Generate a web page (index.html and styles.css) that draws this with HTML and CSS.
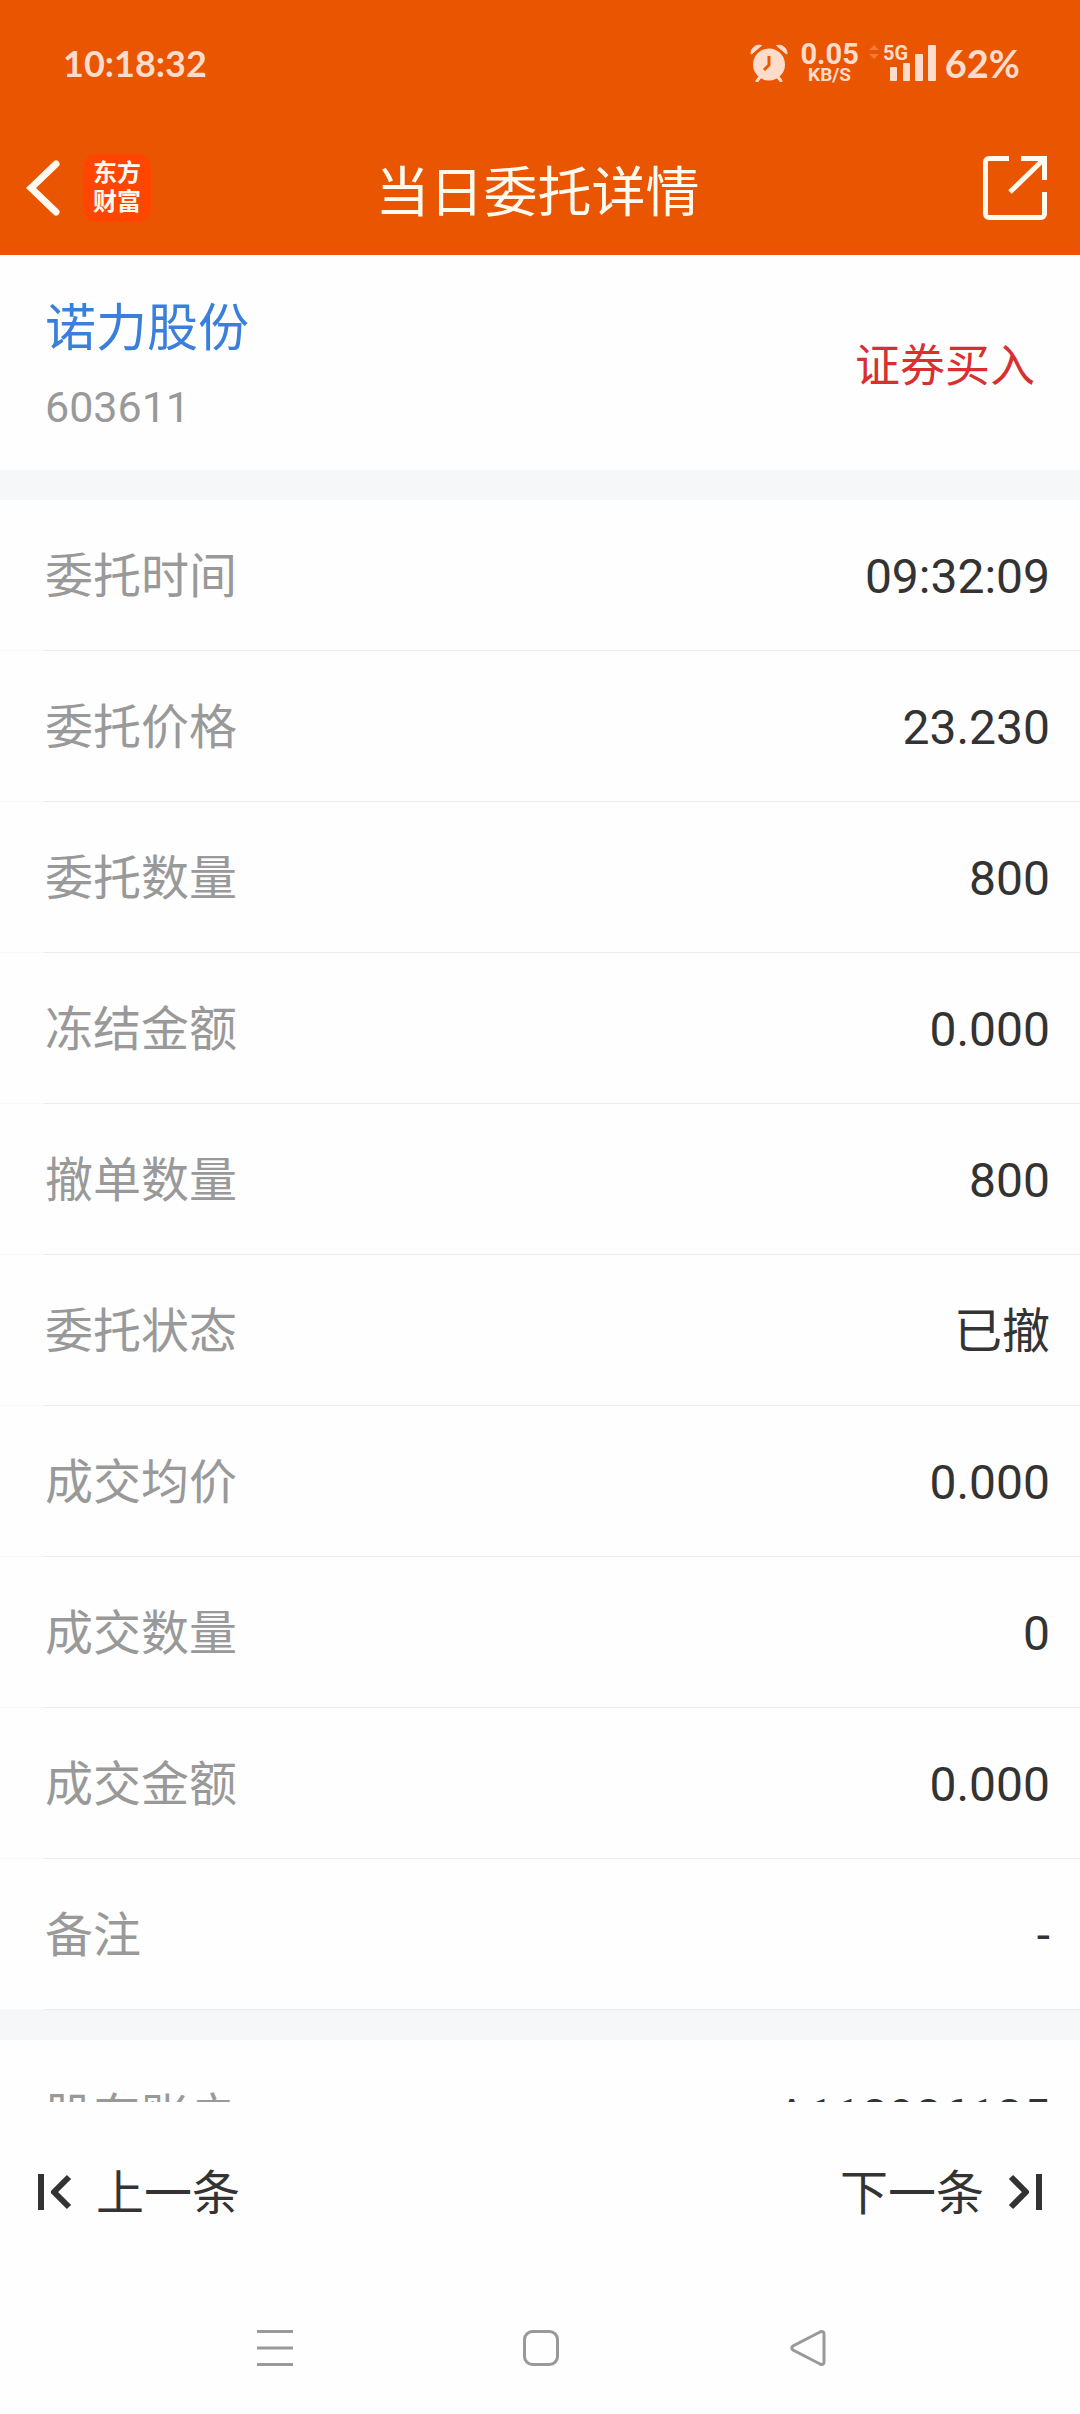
FILE: index.html
```html
<!DOCTYPE html>
<html lang="zh-CN">

<head>
  <meta charset="UTF-8">
  <meta name="viewport" content="width=device-width, initial-scale=1.0">
  <title>当日委托详情</title>
  <link rel="stylesheet" href="styles.css">
</head>

<body>
  <div class="page">
    <header class="top">
      <div class="status-bar">
        <time class="clock">10:18:32</time>
        <div class="status-icons">
          <svg class="icon-alarm" viewBox="0 0 38 38" aria-hidden="true">
            <circle cx="19" cy="20.500" r="16" fill="currentColor" />
            <path d="M1 9.500C1 4 6 0 11.500 1.500L1.500 10zM37 9.500C37 4 32 0 26.500 1.500L36.500 10z"
              fill="currentColor" stroke="currentColor" stroke-width="1" stroke-linejoin="round" />
            <path d="M10 33l-3 4M28 33l3 4" stroke="currentColor" stroke-width="3" stroke-linecap="round" />
            <path class="alarm-hands" d="M19 12v9l-5 5" />
          </svg>
          <div class="net-speed">
            <span class="net-value">0.05</span>
            <span class="net-unit">KB/S</span>
          </div>
          <svg class="icon-signal" viewBox="0 -6 68 50" aria-hidden="true">
            <path class="data-arrows" d="M0 6l5-5 5 5zM0 10h10l-5 5z" />
            <text class="signal-type" x="14" y="16">5G</text>
            <g fill="currentColor">
              <rect x="21" y="23" width="7" height="14" rx="1" />
              <rect x="34" y="19" width="7" height="18" rx="1" />
              <rect x="46" y="10" width="8" height="27" rx="1" />
              <rect x="59" y="1" width="8" height="36" rx="1" />
            </g>
          </svg>
          <span class="battery">62%</span>
        </div>
      </div>

      <div class="title-bar">
        <div class="title-side">
          <button class="icon-btn" type="button" aria-label="返回">
            <svg class="icon-back" viewBox="0 0 34 56" aria-hidden="true">
              <path d="M30 4L5 28l25 24" />
            </svg>
          </button>
          <span class="brand">东方<br>财富</span>
        </div>
        <h1 class="title">当日委托详情</h1>
        <div class="title-side title-side-end">
          <button class="icon-btn" type="button" aria-label="分享">
            <svg class="icon-share" viewBox="0 0 64 64" aria-hidden="true">
              <path d="M26 2.500H6a3.500 3.500 0 0 0-3.500 3.500v52a3.500 3.500 0 0 0 3.500 3.500h52a3.500 3.500 0 0 0 3.500-3.500V36" />
              <path d="M38 2.500h23.500V24M61 3L27 36" />
            </svg>
          </button>
        </div>
      </div>
    </header>

    <main class="content">
      <section class="stock">
        <div>
          <h2 class="stock-name">诺力股份</h2>
          <p class="stock-code">603611</p>
        </div>
        <span class="stock-side">证券买入</span>
      </section>

      <dl class="details">
        <div class="row">
          <dt>委托时间</dt>
          <dd>09:32:09</dd>
        </div>
        <div class="row">
          <dt>委托价格</dt>
          <dd>23.230</dd>
        </div>
        <div class="row">
          <dt>委托数量</dt>
          <dd>800</dd>
        </div>
        <div class="row">
          <dt>冻结金额</dt>
          <dd>0.000</dd>
        </div>
        <div class="row">
          <dt>撤单数量</dt>
          <dd>800</dd>
        </div>
        <div class="row">
          <dt>委托状态</dt>
          <dd>已撤</dd>
        </div>
        <div class="row">
          <dt>成交均价</dt>
          <dd>0.000</dd>
        </div>
        <div class="row">
          <dt>成交数量</dt>
          <dd>0</dd>
        </div>
        <div class="row">
          <dt>成交金额</dt>
          <dd>0.000</dd>
        </div>
        <div class="row">
          <dt>备注</dt>
          <dd>-</dd>
        </div>
      </dl>

      <dl class="details">
        <div class="row">
          <dt>股东账户</dt>
          <dd>A118986185</dd>
        </div>
      </dl>
    </main>

    <footer class="pager">
      <button class="pager-btn" type="button">
        <svg class="icon-step" viewBox="0 0 34 36" aria-hidden="true">
          <path d="M3 0v36M31 3L16 18l15 15" />
        </svg>
        <span class="pager-label">上一条</span>
      </button>
      <button class="pager-btn" type="button">
        <span class="pager-label">下一条</span>
        <svg class="icon-step" viewBox="0 0 34 36" aria-hidden="true">
          <path d="M31 0v36M3 3l15 15L3 33" />
        </svg>
      </button>
    </footer>

    <nav class="system-nav">
      <button class="nav-btn" type="button" aria-label="最近任务">
        <svg class="icon-nav" viewBox="0 0 36 36" aria-hidden="true">
          <path d="M0 1.500h36M0 18h36M0 34.500h36" />
        </svg>
      </button>
      <button class="nav-btn" type="button" aria-label="主屏幕">
        <svg class="icon-nav" viewBox="0 0 36 36" aria-hidden="true">
          <rect x="1.500" y="1.500" width="33" height="33" rx="8" />
        </svg>
      </button>
      <button class="nav-btn" type="button" aria-label="返回上一页">
        <svg class="icon-nav" viewBox="0 0 36 36" aria-hidden="true">
          <path d="M30 2L3 16q-2.500 2 0 4l27 14q4 1.500 4-2V4q0-3.500-4-2z" />
        </svg>
      </button>
    </nav>
  </div>
</body>

</html>
```

FILE: styles.css
```css
*,
*::before,
*::after {
  box-sizing: border-box;
}

body,
h1,
h2,
p,
dl,
dd {
  margin: 0;
  padding: 0;
}

:root {
  /* COLORS */
  --orange: #ea5502;
  --brand: #ff4600;
  --status: #fddccc;
  --blue: #3a7fd9;
  --red: #d9302f;
  --text: #333333;
  --muted: #999999;
  --surface: #fefefe;
  --band: #f6f7f9;
  --line: #ececec;
  --line-soft: #f8f8f8;

  /* SPACE */
  --gutter: 45px;
  --gutter-end: 30px;
  --band-height: 30px;

  /* TYPE */
  --ff-primary: Roboto, "Noto Sans CJK SC", sans-serif;
  --ff-status: Lato, "Noto Sans CJK SC", sans-serif;
  --fs-body: 48px;
}

button {
  padding: 0;
  border: 0;
  font: inherit;
  color: inherit;
  background: none;
  cursor: pointer;
}

svg {
  display: block;
  fill: none;
}

body {
  font-family: var(--ff-primary);
  font-size: var(--fs-body);
  color: var(--text);
  background-color: var(--surface);
}

.page {
  display: flex;
  flex-direction: column;
  height: 100vh;
}

/*** HEADER ***/
.top {
  color: #fffaf0;
  background-color: var(--orange);
}

.status-bar {
  display: flex;
  justify-content: space-between;
  align-items: center;
  height: 126px;
  padding: 0 60px 0 63px;
  font-family: var(--ff-status);
  font-weight: 700;
  color: var(--status);
}

.clock {
  font-size: 36px;
}

.status-icons {
  display: flex;
  align-items: center;
}

.icon-alarm {
  width: 38px;
  height: 38px;
  margin-right: 12px;
}

.alarm-hands {
  stroke: var(--orange);
  stroke-width: 3;
}

.net-speed {
  display: flex;
  flex-direction: column;
  align-items: center;
  margin-right: 10px;
  font-family: Roboto, sans-serif;
}

.net-value {
  font-size: 29px;
  line-height: 24px;
}

.net-unit {
  font-size: 19px;
  line-height: 18px;
}

.icon-signal {
  width: 68px;
  height: 50px;
  margin-right: 8px;
}

.data-arrows {
  fill: #f27a3c;
}

.signal-type {
  font-family: Roboto, sans-serif;
  font-size: 20px;
  fill: currentColor;
}

.battery {
  font-size: 38px;
}

.title-bar {
  display: flex;
  align-items: center;
  height: 129px;
  padding: 0 26px 6px;
}

.title-side {
  display: flex;
  flex: 1;
  align-items: center;
  gap: 23px;
}

.title-side-end {
  justify-content: flex-end;
  padding-right: 7px;
}

.icon-back {
  width: 34px;
  height: 56px;
  stroke: currentColor;
  stroke-width: 7;
  stroke-linecap: round;
}

.brand {
  width: 68px;
  padding: 2px 0 8px;
  border-radius: 14px;
  font-family: "Noto Sans CJK SC", sans-serif;
  font-size: 24px;
  font-weight: 700;
  line-height: 29px;
  text-align: center;
  background-color: var(--brand);
}

.title {
  padding: 12px 0 0 2px;
  font-size: 54px;
  font-weight: 400;
  line-height: 64px;
}

.icon-share {
  width: 64px;
  height: 64px;
  stroke: currentColor;
  stroke-width: 5;
}

/*** CONTENT ***/
.content {
  flex: 1;
  min-height: 0;
  overflow-y: auto;
  scrollbar-width: none;
}

.stock {
  display: flex;
  justify-content: space-between;
  align-items: center;
  padding: 34px var(--gutter) 25px;
}

.stock-name {
  font-size: 51px;
  font-weight: 400;
  line-height: 80px;
  color: var(--blue);
}

.stock-code {
  font-size: 43px;
  line-height: 76px;
  color: var(--muted);
}

.stock-side {
  padding-bottom: 10px;
  font-size: 45px;
  color: var(--red);
}

.details {
  border-top: var(--band-height) solid var(--band);
}

.row {
  display: flex;
  justify-content: space-between;
  padding: 42px var(--gutter-end) 38px var(--gutter);
  border-bottom: 1px solid;
  border-image: linear-gradient(to right, var(--line-soft) var(--gutter), var(--line) var(--gutter)) 1;
  line-height: 70px;
}

.row dt {
  color: var(--muted);
}

/*** FOOTER ***/
.pager {
  display: flex;
  justify-content: space-between;
  padding: 53px 38px;
  background-color: var(--surface);
}

.pager-btn {
  display: flex;
  align-items: center;
  gap: 24px;
  line-height: 70px;
}

.pager-label {
  padding-top: 4px;
}

.icon-step {
  width: 34px;
  height: 36px;
  stroke: currentColor;
  stroke-width: 6;
  stroke-linejoin: round;
}

.system-nav {
  display: flex;
  height: 132px;
  padding: 0 139px 0 142px;
  background-color: var(--surface);
}

.nav-btn {
  display: grid;
  flex: 1;
  place-items: center;
  color: var(--muted);
}

.icon-nav {
  width: 36px;
  height: 36px;
  stroke: currentColor;
  stroke-width: 3;
}
```
